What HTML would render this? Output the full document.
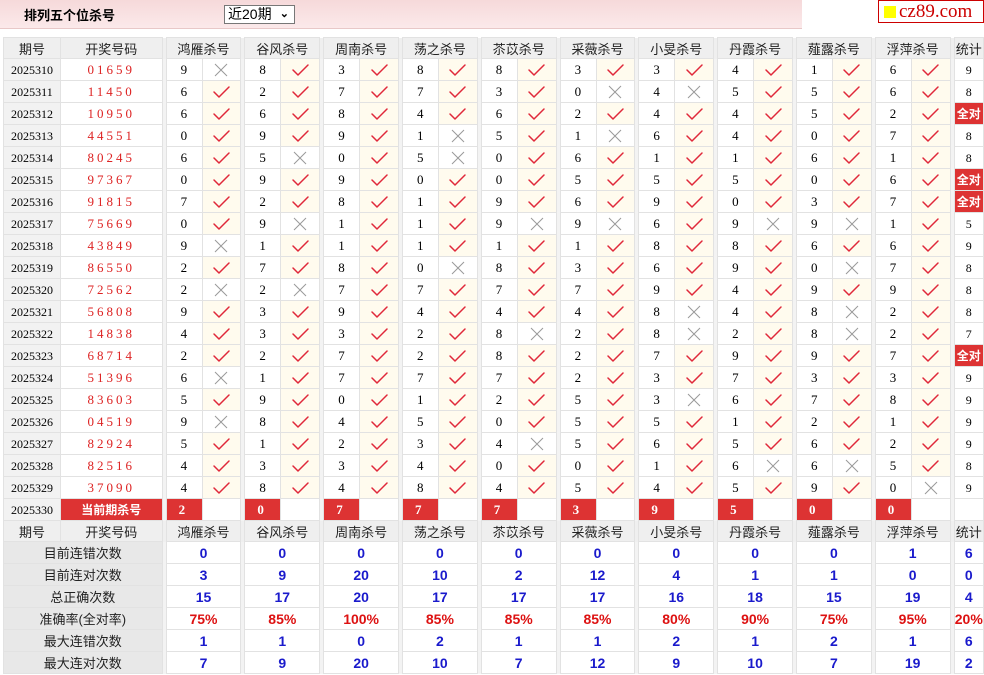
<!DOCTYPE html>
<html><head><meta charset="utf-8">
<style>
*{margin:0;padding:0;box-sizing:border-box}
body{width:984px;height:675px;background:#fff;font-family:"Liberation Serif","Noto Serif CJK SC",serif;font-size:13px;color:#000;position:relative;overflow:hidden}
.top{position:absolute;left:0;top:0;width:802px;height:29px;background:linear-gradient(#f6d9da,#fbe9ea);border-bottom:1px solid #e8c8c8}
.ttl{position:absolute;left:24px;top:5px;font:bold 13px "Liberation Sans","Noto Sans CJK SC",sans-serif}
.sel{position:absolute;left:224px;top:5px;width:71px;height:19px;border:1px solid #777;background:#fff;font:14px "Liberation Sans","Noto Sans CJK SC",sans-serif;padding-left:3px;line-height:17px}
.sel b{position:absolute;right:5px;top:0;font-size:11px}
.logo{position:absolute;left:878px;top:0;width:106px;height:23px;border:1px solid #c00;background:#fff;font:19px "Liberation Serif",serif;color:#c00;line-height:21px;padding-left:5px}
.logo i{display:inline-block;width:12px;height:12px;background:#ff0;margin-right:3px;vertical-align:-1px}
table{position:absolute;left:3px;top:37px;border-collapse:collapse;table-layout:fixed}
td{height:22px;border:1px solid #e2e2e2;text-align:center;padding:0;white-space:nowrap;line-height:20px}
tr.h td{background:#efefef;font:13px "Liberation Sans","Noto Sans CJK SC",sans-serif;color:#222;height:21px}
td.sp{background:#f3f3f3;border-top:none;border-bottom:none;padding:0}
td.q{background:#f2f2f2;font-size:12px}
td.d{color:#d22;letter-spacing:3px;font-size:13px}
td.n{text-align:left;padding-left:14px}
td.m{background:#fffbee}
td.x{background:#fff}
td.s{font-size:12px}
.qd{background:#d33!important;color:#fff;font:bold 12px "Liberation Sans","Noto Sans CJK SC",sans-serif}
.cur{background:#d33!important;color:#fff;font-weight:bold;text-align:left;padding-left:12px}
td.l{background:#e8e8e8;font:13px "Liberation Sans","Noto Sans CJK SC",sans-serif;color:#222}
td.b{color:#1a1acc;font:bold 14px "Liberation Sans",sans-serif}
td.r{color:#d11;font:bold 14px "Liberation Sans",sans-serif}
svg{display:block;margin:auto}
</style></head><body>
<svg width="0" height="0" style="position:absolute"><defs>
<g id="c"><path d="M3 8 L8 13 L18 3" fill="none" stroke="#e0283a" stroke-width="1.5" stroke-linecap="round" stroke-linejoin="round"/></g>
<g id="k"><path d="M3 3 L15 15 M15 3 L3 15" fill="none" stroke="#999" stroke-width="1"/></g>
</defs></svg>
<div class="top"><div class="ttl">排列五个位杀号</div><div class="sel">近20期<b>&#8964;</b></div></div>
<div class="logo"><i></i>cz89.com</div>
<table>
<colgroup><col style="width:57px"><col style="width:102px"><col style="width:4px">
<col style="width:36px"><col style="width:39px"><col style="width:4px">
<col style="width:36px"><col style="width:39px"><col style="width:4px">
<col style="width:36px"><col style="width:39px"><col style="width:4px">
<col style="width:36px"><col style="width:39px"><col style="width:4px">
<col style="width:36px"><col style="width:39px"><col style="width:4px">
<col style="width:36px"><col style="width:39px"><col style="width:4px">
<col style="width:36px"><col style="width:39px"><col style="width:4px">
<col style="width:36px"><col style="width:39px"><col style="width:4px">
<col style="width:36px"><col style="width:39px"><col style="width:4px">
<col style="width:36px"><col style="width:39px"><col style="width:4px">
<col style="width:27px"></colgroup>
<tr class="h"><td>期号</td><td>开奖号码</td><td class="sp"></td><td colspan="2">鸿雁杀号</td><td class="sp"></td><td colspan="2">谷风杀号</td><td class="sp"></td><td colspan="2">周南杀号</td><td class="sp"></td><td colspan="2">荡之杀号</td><td class="sp"></td><td colspan="2">苶苡杀号</td><td class="sp"></td><td colspan="2">采薇杀号</td><td class="sp"></td><td colspan="2">小旻杀号</td><td class="sp"></td><td colspan="2">丹霞杀号</td><td class="sp"></td><td colspan="2">薤露杀号</td><td class="sp"></td><td colspan="2">浮萍杀号</td><td class="sp"></td><td>统计</td></tr>
<tr><td class="q">2025310</td><td class="d">01659</td><td class="sp"></td><td class="n">9</td><td class="x"><svg width="18" height="18"><use href="#k"/></svg></td><td class="sp"></td><td class="n">8</td><td class="m"><svg width="21" height="16"><use href="#c"/></svg></td><td class="sp"></td><td class="n">3</td><td class="m"><svg width="21" height="16"><use href="#c"/></svg></td><td class="sp"></td><td class="n">8</td><td class="m"><svg width="21" height="16"><use href="#c"/></svg></td><td class="sp"></td><td class="n">8</td><td class="m"><svg width="21" height="16"><use href="#c"/></svg></td><td class="sp"></td><td class="n">3</td><td class="m"><svg width="21" height="16"><use href="#c"/></svg></td><td class="sp"></td><td class="n">3</td><td class="m"><svg width="21" height="16"><use href="#c"/></svg></td><td class="sp"></td><td class="n">4</td><td class="m"><svg width="21" height="16"><use href="#c"/></svg></td><td class="sp"></td><td class="n">1</td><td class="m"><svg width="21" height="16"><use href="#c"/></svg></td><td class="sp"></td><td class="n">6</td><td class="m"><svg width="21" height="16"><use href="#c"/></svg></td><td class="sp"></td><td class="s">9</td></tr>
<tr><td class="q">2025311</td><td class="d">11450</td><td class="sp"></td><td class="n">6</td><td class="m"><svg width="21" height="16"><use href="#c"/></svg></td><td class="sp"></td><td class="n">2</td><td class="m"><svg width="21" height="16"><use href="#c"/></svg></td><td class="sp"></td><td class="n">7</td><td class="m"><svg width="21" height="16"><use href="#c"/></svg></td><td class="sp"></td><td class="n">7</td><td class="m"><svg width="21" height="16"><use href="#c"/></svg></td><td class="sp"></td><td class="n">3</td><td class="m"><svg width="21" height="16"><use href="#c"/></svg></td><td class="sp"></td><td class="n">0</td><td class="x"><svg width="18" height="18"><use href="#k"/></svg></td><td class="sp"></td><td class="n">4</td><td class="x"><svg width="18" height="18"><use href="#k"/></svg></td><td class="sp"></td><td class="n">5</td><td class="m"><svg width="21" height="16"><use href="#c"/></svg></td><td class="sp"></td><td class="n">5</td><td class="m"><svg width="21" height="16"><use href="#c"/></svg></td><td class="sp"></td><td class="n">6</td><td class="m"><svg width="21" height="16"><use href="#c"/></svg></td><td class="sp"></td><td class="s">8</td></tr>
<tr><td class="q">2025312</td><td class="d">10950</td><td class="sp"></td><td class="n">6</td><td class="m"><svg width="21" height="16"><use href="#c"/></svg></td><td class="sp"></td><td class="n">6</td><td class="m"><svg width="21" height="16"><use href="#c"/></svg></td><td class="sp"></td><td class="n">8</td><td class="m"><svg width="21" height="16"><use href="#c"/></svg></td><td class="sp"></td><td class="n">4</td><td class="m"><svg width="21" height="16"><use href="#c"/></svg></td><td class="sp"></td><td class="n">6</td><td class="m"><svg width="21" height="16"><use href="#c"/></svg></td><td class="sp"></td><td class="n">2</td><td class="m"><svg width="21" height="16"><use href="#c"/></svg></td><td class="sp"></td><td class="n">4</td><td class="m"><svg width="21" height="16"><use href="#c"/></svg></td><td class="sp"></td><td class="n">4</td><td class="m"><svg width="21" height="16"><use href="#c"/></svg></td><td class="sp"></td><td class="n">5</td><td class="m"><svg width="21" height="16"><use href="#c"/></svg></td><td class="sp"></td><td class="n">2</td><td class="m"><svg width="21" height="16"><use href="#c"/></svg></td><td class="sp"></td><td class="qd">全对</td></tr>
<tr><td class="q">2025313</td><td class="d">44551</td><td class="sp"></td><td class="n">0</td><td class="m"><svg width="21" height="16"><use href="#c"/></svg></td><td class="sp"></td><td class="n">9</td><td class="m"><svg width="21" height="16"><use href="#c"/></svg></td><td class="sp"></td><td class="n">9</td><td class="m"><svg width="21" height="16"><use href="#c"/></svg></td><td class="sp"></td><td class="n">1</td><td class="x"><svg width="18" height="18"><use href="#k"/></svg></td><td class="sp"></td><td class="n">5</td><td class="m"><svg width="21" height="16"><use href="#c"/></svg></td><td class="sp"></td><td class="n">1</td><td class="x"><svg width="18" height="18"><use href="#k"/></svg></td><td class="sp"></td><td class="n">6</td><td class="m"><svg width="21" height="16"><use href="#c"/></svg></td><td class="sp"></td><td class="n">4</td><td class="m"><svg width="21" height="16"><use href="#c"/></svg></td><td class="sp"></td><td class="n">0</td><td class="m"><svg width="21" height="16"><use href="#c"/></svg></td><td class="sp"></td><td class="n">7</td><td class="m"><svg width="21" height="16"><use href="#c"/></svg></td><td class="sp"></td><td class="s">8</td></tr>
<tr><td class="q">2025314</td><td class="d">80245</td><td class="sp"></td><td class="n">6</td><td class="m"><svg width="21" height="16"><use href="#c"/></svg></td><td class="sp"></td><td class="n">5</td><td class="x"><svg width="18" height="18"><use href="#k"/></svg></td><td class="sp"></td><td class="n">0</td><td class="m"><svg width="21" height="16"><use href="#c"/></svg></td><td class="sp"></td><td class="n">5</td><td class="x"><svg width="18" height="18"><use href="#k"/></svg></td><td class="sp"></td><td class="n">0</td><td class="m"><svg width="21" height="16"><use href="#c"/></svg></td><td class="sp"></td><td class="n">6</td><td class="m"><svg width="21" height="16"><use href="#c"/></svg></td><td class="sp"></td><td class="n">1</td><td class="m"><svg width="21" height="16"><use href="#c"/></svg></td><td class="sp"></td><td class="n">1</td><td class="m"><svg width="21" height="16"><use href="#c"/></svg></td><td class="sp"></td><td class="n">6</td><td class="m"><svg width="21" height="16"><use href="#c"/></svg></td><td class="sp"></td><td class="n">1</td><td class="m"><svg width="21" height="16"><use href="#c"/></svg></td><td class="sp"></td><td class="s">8</td></tr>
<tr><td class="q">2025315</td><td class="d">97367</td><td class="sp"></td><td class="n">0</td><td class="m"><svg width="21" height="16"><use href="#c"/></svg></td><td class="sp"></td><td class="n">9</td><td class="m"><svg width="21" height="16"><use href="#c"/></svg></td><td class="sp"></td><td class="n">9</td><td class="m"><svg width="21" height="16"><use href="#c"/></svg></td><td class="sp"></td><td class="n">0</td><td class="m"><svg width="21" height="16"><use href="#c"/></svg></td><td class="sp"></td><td class="n">0</td><td class="m"><svg width="21" height="16"><use href="#c"/></svg></td><td class="sp"></td><td class="n">5</td><td class="m"><svg width="21" height="16"><use href="#c"/></svg></td><td class="sp"></td><td class="n">5</td><td class="m"><svg width="21" height="16"><use href="#c"/></svg></td><td class="sp"></td><td class="n">5</td><td class="m"><svg width="21" height="16"><use href="#c"/></svg></td><td class="sp"></td><td class="n">0</td><td class="m"><svg width="21" height="16"><use href="#c"/></svg></td><td class="sp"></td><td class="n">6</td><td class="m"><svg width="21" height="16"><use href="#c"/></svg></td><td class="sp"></td><td class="qd">全对</td></tr>
<tr><td class="q">2025316</td><td class="d">91815</td><td class="sp"></td><td class="n">7</td><td class="m"><svg width="21" height="16"><use href="#c"/></svg></td><td class="sp"></td><td class="n">2</td><td class="m"><svg width="21" height="16"><use href="#c"/></svg></td><td class="sp"></td><td class="n">8</td><td class="m"><svg width="21" height="16"><use href="#c"/></svg></td><td class="sp"></td><td class="n">1</td><td class="m"><svg width="21" height="16"><use href="#c"/></svg></td><td class="sp"></td><td class="n">9</td><td class="m"><svg width="21" height="16"><use href="#c"/></svg></td><td class="sp"></td><td class="n">6</td><td class="m"><svg width="21" height="16"><use href="#c"/></svg></td><td class="sp"></td><td class="n">9</td><td class="m"><svg width="21" height="16"><use href="#c"/></svg></td><td class="sp"></td><td class="n">0</td><td class="m"><svg width="21" height="16"><use href="#c"/></svg></td><td class="sp"></td><td class="n">3</td><td class="m"><svg width="21" height="16"><use href="#c"/></svg></td><td class="sp"></td><td class="n">7</td><td class="m"><svg width="21" height="16"><use href="#c"/></svg></td><td class="sp"></td><td class="qd">全对</td></tr>
<tr><td class="q">2025317</td><td class="d">75669</td><td class="sp"></td><td class="n">0</td><td class="m"><svg width="21" height="16"><use href="#c"/></svg></td><td class="sp"></td><td class="n">9</td><td class="x"><svg width="18" height="18"><use href="#k"/></svg></td><td class="sp"></td><td class="n">1</td><td class="m"><svg width="21" height="16"><use href="#c"/></svg></td><td class="sp"></td><td class="n">1</td><td class="m"><svg width="21" height="16"><use href="#c"/></svg></td><td class="sp"></td><td class="n">9</td><td class="x"><svg width="18" height="18"><use href="#k"/></svg></td><td class="sp"></td><td class="n">9</td><td class="x"><svg width="18" height="18"><use href="#k"/></svg></td><td class="sp"></td><td class="n">6</td><td class="m"><svg width="21" height="16"><use href="#c"/></svg></td><td class="sp"></td><td class="n">9</td><td class="x"><svg width="18" height="18"><use href="#k"/></svg></td><td class="sp"></td><td class="n">9</td><td class="x"><svg width="18" height="18"><use href="#k"/></svg></td><td class="sp"></td><td class="n">1</td><td class="m"><svg width="21" height="16"><use href="#c"/></svg></td><td class="sp"></td><td class="s">5</td></tr>
<tr><td class="q">2025318</td><td class="d">43849</td><td class="sp"></td><td class="n">9</td><td class="x"><svg width="18" height="18"><use href="#k"/></svg></td><td class="sp"></td><td class="n">1</td><td class="m"><svg width="21" height="16"><use href="#c"/></svg></td><td class="sp"></td><td class="n">1</td><td class="m"><svg width="21" height="16"><use href="#c"/></svg></td><td class="sp"></td><td class="n">1</td><td class="m"><svg width="21" height="16"><use href="#c"/></svg></td><td class="sp"></td><td class="n">1</td><td class="m"><svg width="21" height="16"><use href="#c"/></svg></td><td class="sp"></td><td class="n">1</td><td class="m"><svg width="21" height="16"><use href="#c"/></svg></td><td class="sp"></td><td class="n">8</td><td class="m"><svg width="21" height="16"><use href="#c"/></svg></td><td class="sp"></td><td class="n">8</td><td class="m"><svg width="21" height="16"><use href="#c"/></svg></td><td class="sp"></td><td class="n">6</td><td class="m"><svg width="21" height="16"><use href="#c"/></svg></td><td class="sp"></td><td class="n">6</td><td class="m"><svg width="21" height="16"><use href="#c"/></svg></td><td class="sp"></td><td class="s">9</td></tr>
<tr><td class="q">2025319</td><td class="d">86550</td><td class="sp"></td><td class="n">2</td><td class="m"><svg width="21" height="16"><use href="#c"/></svg></td><td class="sp"></td><td class="n">7</td><td class="m"><svg width="21" height="16"><use href="#c"/></svg></td><td class="sp"></td><td class="n">8</td><td class="m"><svg width="21" height="16"><use href="#c"/></svg></td><td class="sp"></td><td class="n">0</td><td class="x"><svg width="18" height="18"><use href="#k"/></svg></td><td class="sp"></td><td class="n">8</td><td class="m"><svg width="21" height="16"><use href="#c"/></svg></td><td class="sp"></td><td class="n">3</td><td class="m"><svg width="21" height="16"><use href="#c"/></svg></td><td class="sp"></td><td class="n">6</td><td class="m"><svg width="21" height="16"><use href="#c"/></svg></td><td class="sp"></td><td class="n">9</td><td class="m"><svg width="21" height="16"><use href="#c"/></svg></td><td class="sp"></td><td class="n">0</td><td class="x"><svg width="18" height="18"><use href="#k"/></svg></td><td class="sp"></td><td class="n">7</td><td class="m"><svg width="21" height="16"><use href="#c"/></svg></td><td class="sp"></td><td class="s">8</td></tr>
<tr><td class="q">2025320</td><td class="d">72562</td><td class="sp"></td><td class="n">2</td><td class="x"><svg width="18" height="18"><use href="#k"/></svg></td><td class="sp"></td><td class="n">2</td><td class="x"><svg width="18" height="18"><use href="#k"/></svg></td><td class="sp"></td><td class="n">7</td><td class="m"><svg width="21" height="16"><use href="#c"/></svg></td><td class="sp"></td><td class="n">7</td><td class="m"><svg width="21" height="16"><use href="#c"/></svg></td><td class="sp"></td><td class="n">7</td><td class="m"><svg width="21" height="16"><use href="#c"/></svg></td><td class="sp"></td><td class="n">7</td><td class="m"><svg width="21" height="16"><use href="#c"/></svg></td><td class="sp"></td><td class="n">9</td><td class="m"><svg width="21" height="16"><use href="#c"/></svg></td><td class="sp"></td><td class="n">4</td><td class="m"><svg width="21" height="16"><use href="#c"/></svg></td><td class="sp"></td><td class="n">9</td><td class="m"><svg width="21" height="16"><use href="#c"/></svg></td><td class="sp"></td><td class="n">9</td><td class="m"><svg width="21" height="16"><use href="#c"/></svg></td><td class="sp"></td><td class="s">8</td></tr>
<tr><td class="q">2025321</td><td class="d">56808</td><td class="sp"></td><td class="n">9</td><td class="m"><svg width="21" height="16"><use href="#c"/></svg></td><td class="sp"></td><td class="n">3</td><td class="m"><svg width="21" height="16"><use href="#c"/></svg></td><td class="sp"></td><td class="n">9</td><td class="m"><svg width="21" height="16"><use href="#c"/></svg></td><td class="sp"></td><td class="n">4</td><td class="m"><svg width="21" height="16"><use href="#c"/></svg></td><td class="sp"></td><td class="n">4</td><td class="m"><svg width="21" height="16"><use href="#c"/></svg></td><td class="sp"></td><td class="n">4</td><td class="m"><svg width="21" height="16"><use href="#c"/></svg></td><td class="sp"></td><td class="n">8</td><td class="x"><svg width="18" height="18"><use href="#k"/></svg></td><td class="sp"></td><td class="n">4</td><td class="m"><svg width="21" height="16"><use href="#c"/></svg></td><td class="sp"></td><td class="n">8</td><td class="x"><svg width="18" height="18"><use href="#k"/></svg></td><td class="sp"></td><td class="n">2</td><td class="m"><svg width="21" height="16"><use href="#c"/></svg></td><td class="sp"></td><td class="s">8</td></tr>
<tr><td class="q">2025322</td><td class="d">14838</td><td class="sp"></td><td class="n">4</td><td class="m"><svg width="21" height="16"><use href="#c"/></svg></td><td class="sp"></td><td class="n">3</td><td class="m"><svg width="21" height="16"><use href="#c"/></svg></td><td class="sp"></td><td class="n">3</td><td class="m"><svg width="21" height="16"><use href="#c"/></svg></td><td class="sp"></td><td class="n">2</td><td class="m"><svg width="21" height="16"><use href="#c"/></svg></td><td class="sp"></td><td class="n">8</td><td class="x"><svg width="18" height="18"><use href="#k"/></svg></td><td class="sp"></td><td class="n">2</td><td class="m"><svg width="21" height="16"><use href="#c"/></svg></td><td class="sp"></td><td class="n">8</td><td class="x"><svg width="18" height="18"><use href="#k"/></svg></td><td class="sp"></td><td class="n">2</td><td class="m"><svg width="21" height="16"><use href="#c"/></svg></td><td class="sp"></td><td class="n">8</td><td class="x"><svg width="18" height="18"><use href="#k"/></svg></td><td class="sp"></td><td class="n">2</td><td class="m"><svg width="21" height="16"><use href="#c"/></svg></td><td class="sp"></td><td class="s">7</td></tr>
<tr><td class="q">2025323</td><td class="d">68714</td><td class="sp"></td><td class="n">2</td><td class="m"><svg width="21" height="16"><use href="#c"/></svg></td><td class="sp"></td><td class="n">2</td><td class="m"><svg width="21" height="16"><use href="#c"/></svg></td><td class="sp"></td><td class="n">7</td><td class="m"><svg width="21" height="16"><use href="#c"/></svg></td><td class="sp"></td><td class="n">2</td><td class="m"><svg width="21" height="16"><use href="#c"/></svg></td><td class="sp"></td><td class="n">8</td><td class="m"><svg width="21" height="16"><use href="#c"/></svg></td><td class="sp"></td><td class="n">2</td><td class="m"><svg width="21" height="16"><use href="#c"/></svg></td><td class="sp"></td><td class="n">7</td><td class="m"><svg width="21" height="16"><use href="#c"/></svg></td><td class="sp"></td><td class="n">9</td><td class="m"><svg width="21" height="16"><use href="#c"/></svg></td><td class="sp"></td><td class="n">9</td><td class="m"><svg width="21" height="16"><use href="#c"/></svg></td><td class="sp"></td><td class="n">7</td><td class="m"><svg width="21" height="16"><use href="#c"/></svg></td><td class="sp"></td><td class="qd">全对</td></tr>
<tr><td class="q">2025324</td><td class="d">51396</td><td class="sp"></td><td class="n">6</td><td class="x"><svg width="18" height="18"><use href="#k"/></svg></td><td class="sp"></td><td class="n">1</td><td class="m"><svg width="21" height="16"><use href="#c"/></svg></td><td class="sp"></td><td class="n">7</td><td class="m"><svg width="21" height="16"><use href="#c"/></svg></td><td class="sp"></td><td class="n">7</td><td class="m"><svg width="21" height="16"><use href="#c"/></svg></td><td class="sp"></td><td class="n">7</td><td class="m"><svg width="21" height="16"><use href="#c"/></svg></td><td class="sp"></td><td class="n">2</td><td class="m"><svg width="21" height="16"><use href="#c"/></svg></td><td class="sp"></td><td class="n">3</td><td class="m"><svg width="21" height="16"><use href="#c"/></svg></td><td class="sp"></td><td class="n">7</td><td class="m"><svg width="21" height="16"><use href="#c"/></svg></td><td class="sp"></td><td class="n">3</td><td class="m"><svg width="21" height="16"><use href="#c"/></svg></td><td class="sp"></td><td class="n">3</td><td class="m"><svg width="21" height="16"><use href="#c"/></svg></td><td class="sp"></td><td class="s">9</td></tr>
<tr><td class="q">2025325</td><td class="d">83603</td><td class="sp"></td><td class="n">5</td><td class="m"><svg width="21" height="16"><use href="#c"/></svg></td><td class="sp"></td><td class="n">9</td><td class="m"><svg width="21" height="16"><use href="#c"/></svg></td><td class="sp"></td><td class="n">0</td><td class="m"><svg width="21" height="16"><use href="#c"/></svg></td><td class="sp"></td><td class="n">1</td><td class="m"><svg width="21" height="16"><use href="#c"/></svg></td><td class="sp"></td><td class="n">2</td><td class="m"><svg width="21" height="16"><use href="#c"/></svg></td><td class="sp"></td><td class="n">5</td><td class="m"><svg width="21" height="16"><use href="#c"/></svg></td><td class="sp"></td><td class="n">3</td><td class="x"><svg width="18" height="18"><use href="#k"/></svg></td><td class="sp"></td><td class="n">6</td><td class="m"><svg width="21" height="16"><use href="#c"/></svg></td><td class="sp"></td><td class="n">7</td><td class="m"><svg width="21" height="16"><use href="#c"/></svg></td><td class="sp"></td><td class="n">8</td><td class="m"><svg width="21" height="16"><use href="#c"/></svg></td><td class="sp"></td><td class="s">9</td></tr>
<tr><td class="q">2025326</td><td class="d">04519</td><td class="sp"></td><td class="n">9</td><td class="x"><svg width="18" height="18"><use href="#k"/></svg></td><td class="sp"></td><td class="n">8</td><td class="m"><svg width="21" height="16"><use href="#c"/></svg></td><td class="sp"></td><td class="n">4</td><td class="m"><svg width="21" height="16"><use href="#c"/></svg></td><td class="sp"></td><td class="n">5</td><td class="m"><svg width="21" height="16"><use href="#c"/></svg></td><td class="sp"></td><td class="n">0</td><td class="m"><svg width="21" height="16"><use href="#c"/></svg></td><td class="sp"></td><td class="n">5</td><td class="m"><svg width="21" height="16"><use href="#c"/></svg></td><td class="sp"></td><td class="n">5</td><td class="m"><svg width="21" height="16"><use href="#c"/></svg></td><td class="sp"></td><td class="n">1</td><td class="m"><svg width="21" height="16"><use href="#c"/></svg></td><td class="sp"></td><td class="n">2</td><td class="m"><svg width="21" height="16"><use href="#c"/></svg></td><td class="sp"></td><td class="n">1</td><td class="m"><svg width="21" height="16"><use href="#c"/></svg></td><td class="sp"></td><td class="s">9</td></tr>
<tr><td class="q">2025327</td><td class="d">82924</td><td class="sp"></td><td class="n">5</td><td class="m"><svg width="21" height="16"><use href="#c"/></svg></td><td class="sp"></td><td class="n">1</td><td class="m"><svg width="21" height="16"><use href="#c"/></svg></td><td class="sp"></td><td class="n">2</td><td class="m"><svg width="21" height="16"><use href="#c"/></svg></td><td class="sp"></td><td class="n">3</td><td class="m"><svg width="21" height="16"><use href="#c"/></svg></td><td class="sp"></td><td class="n">4</td><td class="x"><svg width="18" height="18"><use href="#k"/></svg></td><td class="sp"></td><td class="n">5</td><td class="m"><svg width="21" height="16"><use href="#c"/></svg></td><td class="sp"></td><td class="n">6</td><td class="m"><svg width="21" height="16"><use href="#c"/></svg></td><td class="sp"></td><td class="n">5</td><td class="m"><svg width="21" height="16"><use href="#c"/></svg></td><td class="sp"></td><td class="n">6</td><td class="m"><svg width="21" height="16"><use href="#c"/></svg></td><td class="sp"></td><td class="n">2</td><td class="m"><svg width="21" height="16"><use href="#c"/></svg></td><td class="sp"></td><td class="s">9</td></tr>
<tr><td class="q">2025328</td><td class="d">82516</td><td class="sp"></td><td class="n">4</td><td class="m"><svg width="21" height="16"><use href="#c"/></svg></td><td class="sp"></td><td class="n">3</td><td class="m"><svg width="21" height="16"><use href="#c"/></svg></td><td class="sp"></td><td class="n">3</td><td class="m"><svg width="21" height="16"><use href="#c"/></svg></td><td class="sp"></td><td class="n">4</td><td class="m"><svg width="21" height="16"><use href="#c"/></svg></td><td class="sp"></td><td class="n">0</td><td class="m"><svg width="21" height="16"><use href="#c"/></svg></td><td class="sp"></td><td class="n">0</td><td class="m"><svg width="21" height="16"><use href="#c"/></svg></td><td class="sp"></td><td class="n">1</td><td class="m"><svg width="21" height="16"><use href="#c"/></svg></td><td class="sp"></td><td class="n">6</td><td class="x"><svg width="18" height="18"><use href="#k"/></svg></td><td class="sp"></td><td class="n">6</td><td class="x"><svg width="18" height="18"><use href="#k"/></svg></td><td class="sp"></td><td class="n">5</td><td class="m"><svg width="21" height="16"><use href="#c"/></svg></td><td class="sp"></td><td class="s">8</td></tr>
<tr><td class="q">2025329</td><td class="d">37090</td><td class="sp"></td><td class="n">4</td><td class="m"><svg width="21" height="16"><use href="#c"/></svg></td><td class="sp"></td><td class="n">8</td><td class="m"><svg width="21" height="16"><use href="#c"/></svg></td><td class="sp"></td><td class="n">4</td><td class="m"><svg width="21" height="16"><use href="#c"/></svg></td><td class="sp"></td><td class="n">8</td><td class="m"><svg width="21" height="16"><use href="#c"/></svg></td><td class="sp"></td><td class="n">4</td><td class="m"><svg width="21" height="16"><use href="#c"/></svg></td><td class="sp"></td><td class="n">5</td><td class="m"><svg width="21" height="16"><use href="#c"/></svg></td><td class="sp"></td><td class="n">4</td><td class="m"><svg width="21" height="16"><use href="#c"/></svg></td><td class="sp"></td><td class="n">5</td><td class="m"><svg width="21" height="16"><use href="#c"/></svg></td><td class="sp"></td><td class="n">9</td><td class="m"><svg width="21" height="16"><use href="#c"/></svg></td><td class="sp"></td><td class="n">0</td><td class="x"><svg width="18" height="18"><use href="#k"/></svg></td><td class="sp"></td><td class="s">9</td></tr>
<tr><td class="q">2025330</td><td class="qd">当前期杀号</td><td class="sp"></td><td class="cur">2</td><td class="x"></td><td class="sp"></td><td class="cur">0</td><td class="x"></td><td class="sp"></td><td class="cur">7</td><td class="x"></td><td class="sp"></td><td class="cur">7</td><td class="x"></td><td class="sp"></td><td class="cur">7</td><td class="x"></td><td class="sp"></td><td class="cur">3</td><td class="x"></td><td class="sp"></td><td class="cur">9</td><td class="x"></td><td class="sp"></td><td class="cur">5</td><td class="x"></td><td class="sp"></td><td class="cur">0</td><td class="x"></td><td class="sp"></td><td class="cur">0</td><td class="x"></td><td class="sp"></td><td></td></tr>
<tr class="h"><td>期号</td><td>开奖号码</td><td class="sp"></td><td colspan="2">鸿雁杀号</td><td class="sp"></td><td colspan="2">谷风杀号</td><td class="sp"></td><td colspan="2">周南杀号</td><td class="sp"></td><td colspan="2">荡之杀号</td><td class="sp"></td><td colspan="2">苶苡杀号</td><td class="sp"></td><td colspan="2">采薇杀号</td><td class="sp"></td><td colspan="2">小旻杀号</td><td class="sp"></td><td colspan="2">丹霞杀号</td><td class="sp"></td><td colspan="2">薤露杀号</td><td class="sp"></td><td colspan="2">浮萍杀号</td><td class="sp"></td><td>统计</td></tr>
<tr><td class="l" colspan="2">目前连错次数</td><td class="sp"></td><td class="b" colspan="2">0</td><td class="sp"></td><td class="b" colspan="2">0</td><td class="sp"></td><td class="b" colspan="2">0</td><td class="sp"></td><td class="b" colspan="2">0</td><td class="sp"></td><td class="b" colspan="2">0</td><td class="sp"></td><td class="b" colspan="2">0</td><td class="sp"></td><td class="b" colspan="2">0</td><td class="sp"></td><td class="b" colspan="2">0</td><td class="sp"></td><td class="b" colspan="2">0</td><td class="sp"></td><td class="b" colspan="2">1</td><td class="sp"></td><td class="b">6</td></tr>
<tr><td class="l" colspan="2">目前连对次数</td><td class="sp"></td><td class="b" colspan="2">3</td><td class="sp"></td><td class="b" colspan="2">9</td><td class="sp"></td><td class="b" colspan="2">20</td><td class="sp"></td><td class="b" colspan="2">10</td><td class="sp"></td><td class="b" colspan="2">2</td><td class="sp"></td><td class="b" colspan="2">12</td><td class="sp"></td><td class="b" colspan="2">4</td><td class="sp"></td><td class="b" colspan="2">1</td><td class="sp"></td><td class="b" colspan="2">1</td><td class="sp"></td><td class="b" colspan="2">0</td><td class="sp"></td><td class="b">0</td></tr>
<tr><td class="l" colspan="2">总正确次数</td><td class="sp"></td><td class="b" colspan="2">15</td><td class="sp"></td><td class="b" colspan="2">17</td><td class="sp"></td><td class="b" colspan="2">20</td><td class="sp"></td><td class="b" colspan="2">17</td><td class="sp"></td><td class="b" colspan="2">17</td><td class="sp"></td><td class="b" colspan="2">17</td><td class="sp"></td><td class="b" colspan="2">16</td><td class="sp"></td><td class="b" colspan="2">18</td><td class="sp"></td><td class="b" colspan="2">15</td><td class="sp"></td><td class="b" colspan="2">19</td><td class="sp"></td><td class="b">4</td></tr>
<tr><td class="l" colspan="2">准确率(全对率)</td><td class="sp"></td><td class="r" colspan="2">75%</td><td class="sp"></td><td class="r" colspan="2">85%</td><td class="sp"></td><td class="r" colspan="2">100%</td><td class="sp"></td><td class="r" colspan="2">85%</td><td class="sp"></td><td class="r" colspan="2">85%</td><td class="sp"></td><td class="r" colspan="2">85%</td><td class="sp"></td><td class="r" colspan="2">80%</td><td class="sp"></td><td class="r" colspan="2">90%</td><td class="sp"></td><td class="r" colspan="2">75%</td><td class="sp"></td><td class="r" colspan="2">95%</td><td class="sp"></td><td class="r">20%</td></tr>
<tr><td class="l" colspan="2">最大连错次数</td><td class="sp"></td><td class="b" colspan="2">1</td><td class="sp"></td><td class="b" colspan="2">1</td><td class="sp"></td><td class="b" colspan="2">0</td><td class="sp"></td><td class="b" colspan="2">2</td><td class="sp"></td><td class="b" colspan="2">1</td><td class="sp"></td><td class="b" colspan="2">1</td><td class="sp"></td><td class="b" colspan="2">2</td><td class="sp"></td><td class="b" colspan="2">1</td><td class="sp"></td><td class="b" colspan="2">2</td><td class="sp"></td><td class="b" colspan="2">1</td><td class="sp"></td><td class="b">6</td></tr>
<tr><td class="l" colspan="2">最大连对次数</td><td class="sp"></td><td class="b" colspan="2">7</td><td class="sp"></td><td class="b" colspan="2">9</td><td class="sp"></td><td class="b" colspan="2">20</td><td class="sp"></td><td class="b" colspan="2">10</td><td class="sp"></td><td class="b" colspan="2">7</td><td class="sp"></td><td class="b" colspan="2">12</td><td class="sp"></td><td class="b" colspan="2">9</td><td class="sp"></td><td class="b" colspan="2">10</td><td class="sp"></td><td class="b" colspan="2">7</td><td class="sp"></td><td class="b" colspan="2">19</td><td class="sp"></td><td class="b">2</td></tr>
</table>
</body></html>
